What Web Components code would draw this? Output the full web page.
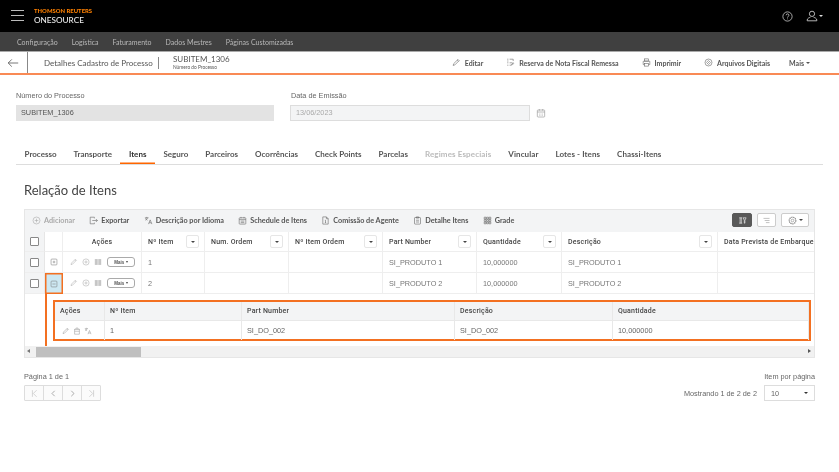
<!DOCTYPE html>
<html lang="pt"><head><meta charset="utf-8"><title>Detalhes Cadastro de Processo</title>
<style>
html,body{margin:0;padding:0;background:#fff}
body{width:839px;height:472px;overflow:hidden;font-family:"Lato","Liberation Sans",sans-serif;color:#444;filter:blur(.35px)}
</style></head><body>
<app-top></app-top>
<app-nav></app-nav>
<page-head></page-head>
<process-form></process-form>
<tab-strip></tab-strip>
<section-title>Relação de Itens</section-title>
<items-grid></items-grid>
<pager-bar></pager-bar>
<script>
const P={
 pencil:'<path d="M2 12.500l.8-3L10 2.300l2 2-7.200 7.200z"/><path d="M8.800 3.500l2 2"/>',
 reserve:'<path d="M2 2h2M2 5h2M2 8h2M2 12h2M6 2h6v3M6 12h3M6 8h5"/><path d="M9 11l3-3 1 1-3 3z"/>',
 print:'<rect x="4" y="1.500" width="7" height="3.500"/><path d="M4 11H2V5.500h11V11h-2"/><rect x="4" y="9" width="7" height="4.500"/>',
 clip:'<circle cx="7.500" cy="7.500" r="5.800"/><path d="M5 10l5-5M7 11.500l4.500-4.500M3.500 8l4.500-4.500"/>',
 cal:'<rect x="2" y="3" width="11" height="10.500" rx="1"/><path d="M2 6h11M5 1.500V4M10 1.500V4M4.500 9h1M7 9h1M9.500 9h1M4.500 11h1M7 11h1M9.500 11h1"/>',
 plusc:'<circle cx="7.500" cy="7.500" r="5.800"/><path d="M7.500 4.500v6M4.500 7.500h6"/>',
 export:'<path d="M9 4V2H2v11h7v-2"/><path d="M5.500 7.500H14M11.500 5l2.500 2.500-2.500 2.500"/>',
 lang:'<path d="M1.500 3h6M4.500 1.500V3M2.200 7c2-1 3.300-2.500 3.800-4M2.500 4c.6 1.300 1.700 2.300 3.300 3"/><path d="M7.500 13.500l2.800-7 2.800 7M8.500 11.300h3.600"/>',
 sched:'<rect x="2" y="3" width="11" height="10.500" rx="1"/><path d="M2 6h11M5 1.500V4M10 1.500V4M4.500 8.500h6M4.500 11h6"/>',
 doc:'<path d="M3 1.500h6l3 3v9H3z"/><path d="M9 1.500v3h3M7.500 7v4M6.500 7h1M6.500 11h2"/>',
 clipb:'<rect x="2.500" y="2.500" width="10" height="11" rx="1"/><path d="M5.500 1.500h4v2h-4zM5 7h5M5 10h5"/>',
 grade:'<path d="M2 2h3v3H2zM6 2h3v3H6zM10 2h3v3h-3zM2 6h3v3H2zM6 6h3v3H6zM10 6h3v3h-3zM2 10h3v3H2zM6 10h3v3H6zM10 10h3v3h-3z"/>',
 filter:'<path d="M2 3h5M3.500 3v9M5.500 3v9M2 12h5"/><path d="M8.500 3h5l-2 4v5h-1V7z"/>',
 lines:'<path d="M2.500 4h10M4.500 7.500h8M6.500 11h6"/>',
 gear:'<circle cx="7.500" cy="7.500" r="2.200"/><circle cx="7.500" cy="7.500" r="5.500" stroke-dasharray="2.200 1.100" stroke-width="2"/>',
 bars:'<path d="M2.500 2v11M5 2v11M7.500 2v11M10 2v11M12.500 2v11" stroke-width="1.500"/>',
 trash:'<path d="M2 4.500h11M5.500 4.500V2h4v2.500M3 4.500v9h9v-9M3 8h9"/>',
 plusbox:'<rect x="2" y="2" width="11" height="11" rx="1.500"/><path d="M7.500 5v5M5 7.500h5"/>',
 minusbox:'<rect x="2" y="2" width="11" height="11" rx="1.500"/><path d="M4.500 7.500h6"/>',
 first:'<path d="M4 2v11M11 2L5.500 7.500 11 13"/>',
 prev:'<path d="M9.500 3L5 7.500 9.500 12"/>',
 next:'<path d="M5.500 3L10 7.500 5.500 12"/>',
 last:'<path d="M11 2v11M4 2l5.500 5.500L4 13"/>',
 back:'<path d="M14 7.500H1.500M6 3L1.500 7.500 6 12"/>',
 help:'<circle cx="7.500" cy="7.500" r="6.300"/><path d="M5.600 5.800c0-2.500 3.900-2.500 3.900 0 0 1.500-2 1.600-2 3.200M7.500 10.300v1"/>',
 user:'<circle cx="7.500" cy="4.800" r="3.300"/><path d="M1.500 13.500v-1c0-2 2.500-3 4-3.400M13.500 13.500v-1c0-2-2.500-3-4-3.400M1.500 13.500h12"/>'
};
class UiIcon extends HTMLElement{
 connectedCallback(){
  const s=this.getAttribute('size')||9,c=this.getAttribute('color')||'#777',w=this.getAttribute('stroke')||1;
  this.attachShadow({mode:'open'}).innerHTML=`<style>:host{display:inline-flex;flex:none;width:${s}px;height:${s}px}svg{width:100%;height:100%;display:block;fill:none;stroke:${c};stroke-width:${w}}</style><svg viewBox="0 0 15 15">${P[this.getAttribute('name')]||''}</svg>`;
 }
}
customElements.define('ui-icon',UiIcon);
function el(tag,html,css){
 customElements.define(tag,class extends HTMLElement{
  connectedCallback(){this.attachShadow({mode:'open'}).innerHTML=`<style>${css}</style>${html}`;}
 });
}
el('app-top',`
 <div class="burger"><i></i><i></i><i></i></div>
 <div class="logo"><b>THOMSON REUTERS</b><span>ONESOURCE</span></div>
 <div class="right"><ui-icon name="help" size="11" color="#ddd"></ui-icon><ui-icon name="user" size="12" color="#ddd"></ui-icon><em></em></div>`,`
 :host{display:flex;align-items:center;height:32px;background:#000;box-sizing:border-box;padding-left:11px}
 .burger{display:flex;flex-direction:column;gap:3.500px;width:13px;margin-top:-1px}
 i{display:block;height:1.500px;background:#bbb}
 .logo{margin-left:10px;display:flex;flex-direction:column;margin-top:-1px}
 b{font:900 5.900px/8px "Lato",sans-serif;color:#ff8000;white-space:nowrap}
 span{font:500 8.200px/10px "Lato",sans-serif;color:#eee;white-space:nowrap}
 .right{margin-left:auto;display:flex;align-items:center;padding-right:16px}
 ui-icon[name=user]{margin-left:13px}
 em{border:2px solid transparent;border-top:2.500px solid #ddd;border-bottom:0;margin-left:1px}`);
el('app-nav',`<a>Configuração</a><a>Logística</a><a>Faturamento</a><a>Dados Mestres</a><a>Páginas Customizadas</a>`,`
 :host{display:flex;height:19px;background:#404040;border-bottom:1px solid #aaa;padding-left:17px;gap:14px;align-items:center;font:400 7px "Lato",sans-serif;color:#b8b8b8;box-sizing:content-box}
 a{white-space:nowrap}`);
el('page-head',`
 <div class="back"><ui-icon name="back" size="12" color="#555"></ui-icon></div>
 <div class="title">Detalhes Cadastro de Processo</div>
 <div class="id"><div>SUBITEM_1306</div><small>Número do Processo</small></div>
 <nav>
  <a><ui-icon name="pencil" color="#666"></ui-icon>Editar</a>
  <a><ui-icon name="reserve" color="#666"></ui-icon>Reserva de Nota Fiscal Remessa</a>
  <a><ui-icon name="print" color="#666"></ui-icon>Imprimir</a>
  <a><ui-icon name="clip" color="#666"></ui-icon>Arquivos Digitais</a>
  <a class="more">Mais<em></em></a>
 </nav>`,`
 :host{display:flex;align-items:center;height:21px;border-bottom:2px solid #f98a55;font-family:"Lato",sans-serif}
 .back{height:100%;box-sizing:border-box;border-right:1px solid #888;display:flex;align-items:center;padding-left:7px;width:28px}
 .title{margin-left:16px;font-size:8px;color:#555;white-space:nowrap;padding-right:6px;width:108px;box-sizing:content-box;height:12px;line-height:12px;border-right:1px solid #888}
 .id{margin-left:14px;font-size:8px;color:#555;line-height:9px;width:60px;white-space:nowrap}
 small{display:block;font-size:4.800px;line-height:6px}
 nav{margin-left:auto;display:flex;padding-right:29px;gap:23px;font-weight:700;font-size:7px;color:#555;align-items:center}
 a{display:flex;align-items:center;gap:4px;white-space:nowrap}
 .more{margin-left:-4px;gap:2px}
 em{border:2px solid transparent;border-top:2px solid #555;border-bottom:0}`);
el('process-form',`
 <div class="f a"><label>Número do Processo</label><div class="in ro">SUBITEM_1306</div></div>
 <div class="f b"><label>Data de Emissão</label><div class="row"><div class="in dis">13/06/2023</div><ui-icon name="cal" size="10" color="#999"></ui-icon></div></div>`,`
 :host{display:flex;padding:16px 0 0 16px;font:400 7.300px "Liberation Sans",sans-serif;color:#666}
 label{display:block;line-height:10px;margin-bottom:4px}
 .a{width:258px;margin-right:16px}
 .row{display:flex;align-items:center;gap:6px}
 .in{height:16px;line-height:16px;box-sizing:border-box;padding-left:5px}
 .ro{background:#e3e3e3;color:#555}
 .dis{width:240px;background:#f3f4f5;border:1px solid #ddd;color:#aaa;line-height:14px}
 .b label{padding-left:1px}`);
el('tab-strip',`<a>Processo</a><a>Transporte</a><a class="on">Itens</a><a>Seguro</a><a>Parceiros</a><a>Ocorrências</a><a>Check Points</a><a>Parcelas</a><a class="off">Regimes Especiais</a><a class="w">Vincular</a><a class="w">Lotes - Itens</a><a class="w">Chassi-Itens</a>`,`
 :host{display:flex;margin:23px 16px 0;height:20px;border-bottom:1px solid #ddd;font:700 8px/20px "Lato",sans-serif;color:#555}
 a{padding:0 8.500px;white-space:nowrap;height:20px;box-sizing:border-box}
 .on{box-shadow:inset 0 -1.500px 0 #f60;color:#333}
 .off{color:#bbb;letter-spacing:.13px}
 .w{letter-spacing:.08px}`);
el('section-title',`<h2><slot></slot></h2>`,`
 :host{display:block;margin:16px 0 0 24px}
 h2{margin:0;font:400 13px/18px "Lato",sans-serif;color:#444}`);
const hd=(t,f=1)=>`<div class="c h">${t}${f?'<span class="fb"><em></em></span>':''}</div>`;
const acts=`<div class="c act"><ui-icon name="pencil" size="8" color="#aaa"></ui-icon><ui-icon name="plusc" size="8" color="#aaa"></ui-icon><ui-icon name="bars" size="8" color="#aaa"></ui-icon><span class="mais">Mais<em></em></span></div>`;
const row=(n,open)=>`<div class="c ck"><i class="box"></i></div><div class="c ex ${open?'open':''}"><ui-icon name="${open?'minusbox':'plusbox'}" size="8" color="#777"></ui-icon></div>${acts}<div class="c">${n}</div><div class="c"></div><div class="c"></div><div class="c">SI_PRODUTO ${n}</div><div class="c">10,000000</div><div class="c">SI_PRODUTO ${n}</div><div class="c"></div>`;
el('items-grid',`
 <div class="tb">
  <a class="dis"><ui-icon name="plusc" color="#aaa"></ui-icon>Adicionar</a>
  <a><ui-icon name="export" color="#666"></ui-icon>Exportar</a>
  <a><ui-icon name="lang" color="#666"></ui-icon>Descrição por Idioma</a>
  <a><ui-icon name="sched" color="#666"></ui-icon>Schedule de Itens</a>
  <a><ui-icon name="doc" color="#666"></ui-icon>Comissão de Agente</a>
  <a><ui-icon name="clipb" color="#666"></ui-icon>Detalhe Itens</a>
  <a><ui-icon name="grade" color="#666"></ui-icon>Grade</a>
  <div class="tools"><b class="dark"><ui-icon name="filter" color="#fff"></ui-icon></b><b class="w1"><ui-icon name="lines" color="#999"></ui-icon></b><b class="w2"><ui-icon name="gear" color="#888"></ui-icon><em></em></b></div>
 </div>
 <div class="clip">
 <div class="t">
  <div class="c ck hck"><i class="box"></i></div><div class="c hex"></div><div class="c h ctr">Ações</div>
  ${hd('Nº Item')}${hd('Num. Ordem')}${hd('Nº Item Ordem')}${hd('Part Number')}${hd('Quantidade')}${hd('Descrição')}${hd('Data Prevista de Embarque',0)}
  ${row(1)}
  ${row(2,1)}
 </div>
 <div class="detail">
  <div class="frame">
   <div class="d dh">Ações</div><div class="d dh">Nº Item</div><div class="d dh">Part Number</div><div class="d dh">Descrição</div><div class="d dh">Quantidade</div>
   <div class="d dact"><ui-icon name="pencil" size="8" color="#999"></ui-icon><ui-icon name="trash" size="8" color="#999"></ui-icon><ui-icon name="lang" size="8" color="#999"></ui-icon></div><div class="d">1</div><div class="d">SI_DO_002</div><div class="d">SI_DO_002</div><div class="d">10,000000</div>
  </div>
 </div>
 </div>
 <div class="sb"><s class="l"></s><div class="thumb"></div><s class="r"></s></div>`,`
 :host{display:block;margin:10px 24px 0;width:791px;border:1px solid #e6e6e6;box-sizing:border-box;height:149px;font:400 7.300px "Liberation Sans",sans-serif;color:#666}
 .tb{display:flex;align-items:center;height:22px;box-sizing:border-box;padding-bottom:2px;background:#f3f4f5;padding-left:7px;gap:14.400px;font:700 7.250px "Lato",sans-serif;color:#555}
 .tb a{display:flex;align-items:center;gap:3px;white-space:nowrap}
 .dis{color:#aaa}
 .tools{margin-left:auto;display:flex;gap:5px;padding-right:5px}
 .tools b{height:14px;box-sizing:border-box;display:flex;align-items:center;justify-content:center;border:1px solid #ccc;border-radius:2px;background:#fff}
 .tools .dark{width:20px;background:#595959;border-color:#595959}
 .w1{width:19px}.w2{width:28px;gap:2px}
 em{display:inline-block;border:2px solid transparent;border-top:2.500px solid #444;border-bottom:0}
 .clip{overflow:hidden}
 .t{display:grid;width:840px;grid-template-columns:20px 18px 79px 63px 84px 94px 94px 85px 156px 115px;grid-template-rows:20px 21px 21px}
 .c{display:flex;align-items:center;padding-left:6px;border-right:1px solid #eee;border-bottom:1px solid #eee;box-sizing:border-box;white-space:nowrap;position:relative;overflow:hidden;color:#777}
 .h{font-family:"Roboto",sans-serif;font-weight:500;font-size:7px;color:#444;letter-spacing:.2px;padding-right:5px;justify-content:space-between}
 .ctr{justify-content:center;padding:0}
 .fb{width:13px;height:13px;box-sizing:border-box;border:1px solid #e6e6e6;border-radius:2px;display:flex;align-items:center;justify-content:center;background:#fff;flex:none}
 .ck{padding:0;justify-content:center;background:#f3f4f5;border-right:1px solid #e6e6e6}
 .box{width:7px;height:7px;border:1px solid #888;border-radius:1px;background:#fff}
 .ex{padding:0;justify-content:center}
 .open{background:#cde8f2;box-shadow:inset 0 0 0 1.500px #f37021;border:0;}
 .act{gap:4px;padding-left:7px}
 .mais{display:inline-flex;align-items:center;justify-content:center;gap:1.500px;width:28px;height:10px;box-sizing:border-box;border:1px solid #aaa;border-radius:3px;font:700 4.500px "Liberation Sans",sans-serif;color:#555;margin-left:1px}
 .mais em{border-width:1.500px;border-top-width:2px;border-bottom:0}
 .detail{height:52px;box-sizing:border-box;padding:6px 3px 5px 6px;margin-left:20px;border-left:2px solid #f37021;width:771px}
 .frame{display:grid;grid-template-columns:50px 137px 213px 158px 196px;grid-template-rows:19px 19px;border:2px solid #f37021;width:758px;box-sizing:border-box;height:41px}
 .d{display:flex;align-items:center;padding-left:5px;border-right:1px solid #e8e8e8;box-sizing:border-box;color:#666}
 .dh{background:#f3f4f5;font-family:"Roboto",sans-serif;font-weight:500;font-size:7px;color:#444;border-bottom:1px solid #e8e8e8;letter-spacing:.2px}
 .dact{gap:3px;padding-left:7px}
 .sb{height:11px;background:#f1f1f1;display:flex;align-items:center;position:relative}
 .thumb{width:105px;height:10px;background:#bfbfbf;margin-left:11px;margin-top:1px}
 s{position:absolute;border:2.500px solid transparent;top:3px}
 .l{left:2px;border-right:3px solid #777;border-left:0}
 .r{right:3px;border-left:3px solid #555;border-right:0}`);
el('pager-bar',`
 <div class="l"><div class="cap">Página 1 de 1</div><div class="btns"><b><ui-icon name="first" color="#bbb"></ui-icon></b><b><ui-icon name="prev" color="#777"></ui-icon></b><b><ui-icon name="next" color="#777"></ui-icon></b><b><ui-icon name="last" color="#bbb"></ui-icon></b></div></div>
 <div class="r"><div class="cap right">Item por página</div><div class="row"><span>Mostrando 1 de 2 de 2</span><div class="sel">10<em></em></div></div></div>`,`
 :host{display:flex;justify-content:space-between;margin:14px 24px 0;font:400 7.300px "Liberation Sans",sans-serif;color:#666}
 .cap{line-height:10px;margin-bottom:3px}.right{text-align:right}
 .btns{display:flex;border:1px solid #ddd;width:77px;height:16px;box-sizing:border-box;border-radius:1px;background:#fbfbfb}
 b{flex:1;display:flex;align-items:center;justify-content:center;border-right:1px solid #ddd}
 b:last-child{border:0}
 .row{display:flex;align-items:center;gap:7px}
 .sel{width:51px;height:16px;box-sizing:border-box;border:1px solid #ddd;padding:0 6px;display:flex;align-items:center;justify-content:space-between}
 em{border:2px solid transparent;border-top:2.500px solid #333;border-bottom:0}`);
</script>
</body></html>
